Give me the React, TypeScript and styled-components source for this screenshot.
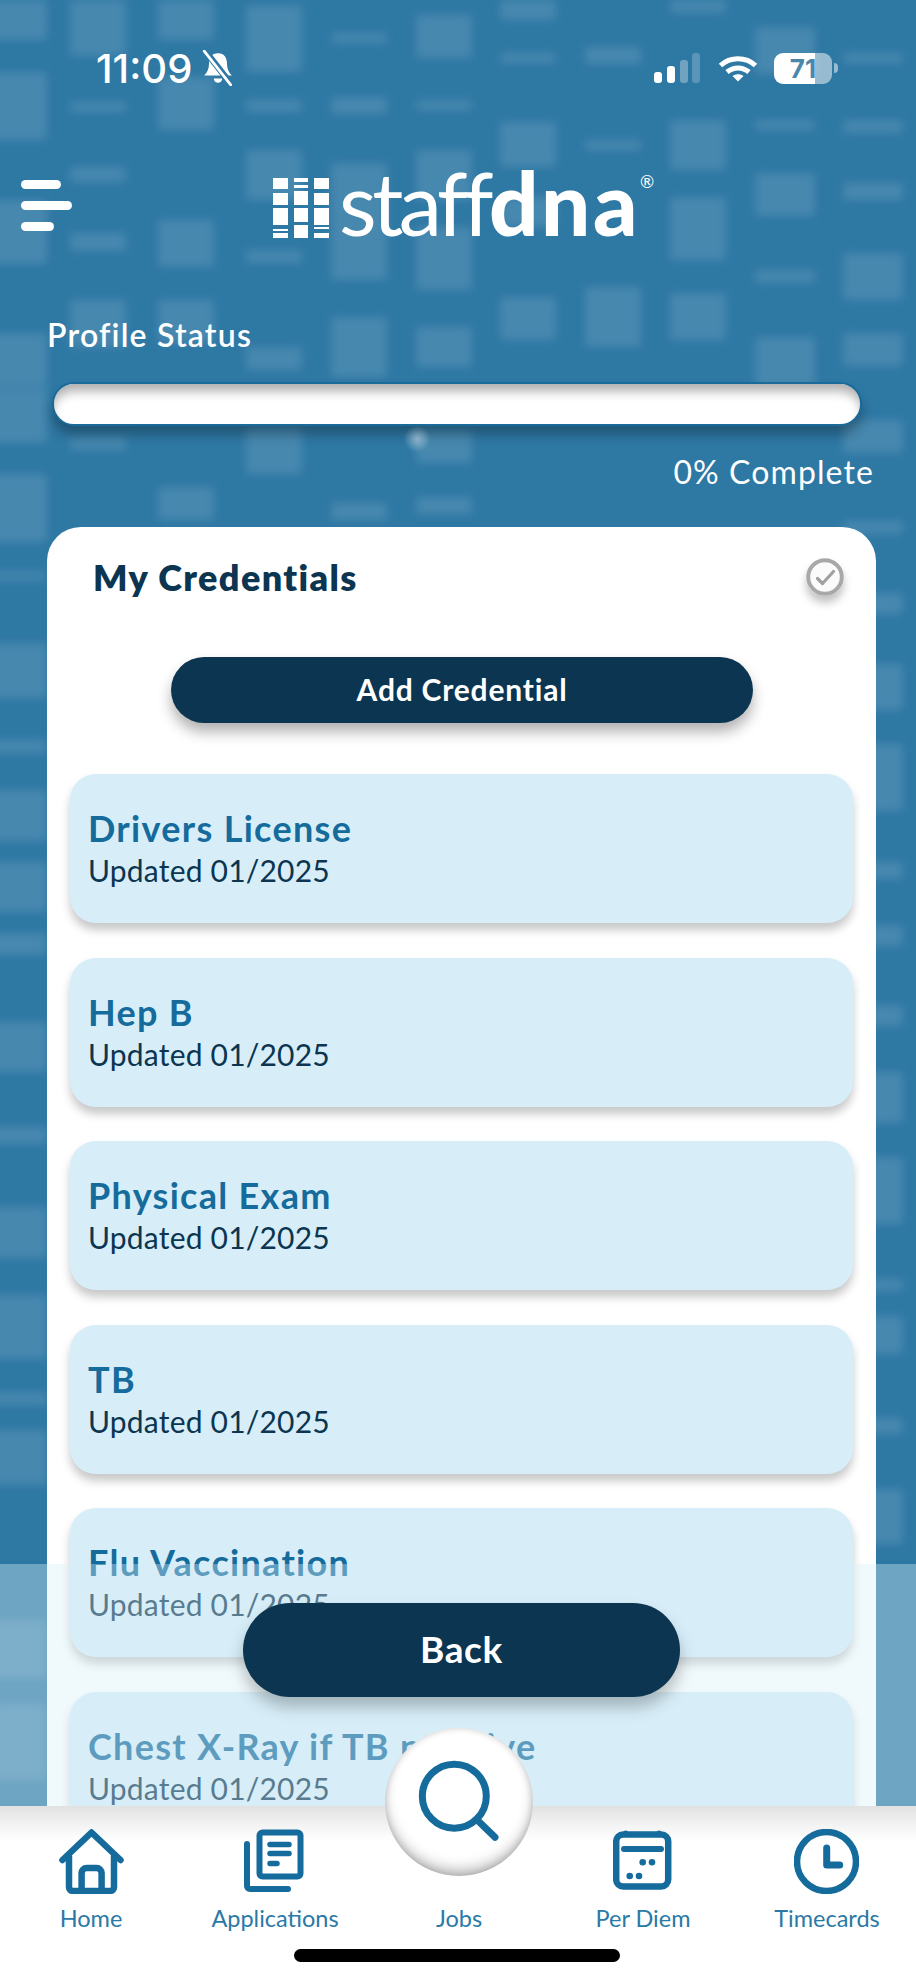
import * as React from 'react';
import styled, { createGlobalStyle } from 'styled-components';

const GlobalStyle = createGlobalStyle`
  html, body {
    margin: 0;
    padding: 0;
    background: #2e78a4;
  }
  * {
    box-sizing: border-box;
  }
`;

const FONT = `'Lato', 'Open Sans', sans-serif`;
const NAVY = '#0b3550';
const BLUE = '#146b9c';

// x start of each faded column and its [y, height] blocks
const BG_COLUMNS: [number, number, [number, number][]][] = [
  [-10, 57, [[0, 40], [72, 68], [200, 64], [333, 55], [390, 53], [474, 68], [572, 8], [643, 55], [740, 13], [790, 51], [862, 50], [933, 22], [1022, 50], [1127, 17], [1207, 51], [1295, 64], [1392, 13], [1430, 55], [1620, 58], [1704, 76]]],
  [70, 56, [[0, 56], [102, 10], [167, 15], [233, 18], [300, 47], [437, 13]]],
  [158, 56, [[0, 40], [77, 53], [220, 47], [300, 43], [487, 33]]],
  [246, 56, [[5, 67], [100, 12], [150, 50], [250, 13], [347, 23], [427, 47]]],
  [331, 56, [[33, 10], [97, 17], [163, 117], [317, 60], [503, 17]]],
  [416, 56, [[15, 43], [100, 10], [150, 50], [227, 63], [327, 40], [430, 33], [497, 17]]],
  [500, 56, [[0, 20], [53, 10], [122, 45], [197, 30], [297, 43]]],
  [585, 56, [[47, 17], [140, 10], [287, 60]]],
  [670, 56, [[0, 13], [120, 50], [197, 63], [293, 47]]],
  [755, 60, [[27, 47], [120, 10], [173, 43], [270, 13], [337, 53]]],
  [843, 60, [[53, 10], [120, 13], [183, 17], [253, 47], [333, 33], [420, 33], [521, 13], [593, 21], [664, 46], [744, 67], [862, 17], [925, 21], [1005, 21], [1072, 51], [1157, 67], [1279, 12], [1316, 38], [1418, 16], [1489, 55]]],
];

const Page = styled.div`
  position: relative;
  width: 916px;
  height: 1980px;
  overflow: hidden;
  background: #2e78a4;
  font-family: ${FONT};
`;

const Backdrop = styled.svg`
  position: absolute;
  inset: 0;
`;

const Content = styled.div`
  position: relative;
  display: flex;
  flex-direction: column;
`;

const StatusBar = styled.div`
  display: flex;
  align-items: center;
  height: 40px;
  margin-top: 48px;
  padding: 0 78px 0 96px;
  color: #fff;
`;

const Time = styled.span`
  font-family: 'Inter', sans-serif;
  font-size: 40px;
  font-weight: 500;
`;

const BellIcon = styled.svg`
  margin-left: 8px;
`;

const StatusIcons = styled.div`
  display: flex;
  align-items: center;
  margin-left: auto;
`;

const WifiIcon = styled.svg`
  margin: 0 16px 0 17px;
`;

const Battery = styled.div`
  position: relative;
  width: 58px;
  height: 31px;
  border-radius: 9px;
  overflow: hidden;
  background: linear-gradient(to right, #fff 71%, rgba(255, 255, 255, 0.5) 71%);
  display: flex;
  align-items: center;
  justify-content: center;
  font-family: 'Inter', sans-serif;
  font-size: 26px;
  font-weight: 700;
  color: #4b87ab;
`;

const BatteryNub = styled.div`
  width: 4px;
  height: 10px;
  margin-left: 2px;
  border-radius: 0 4px 4px 0;
  background: rgba(255, 255, 255, 0.5);
`;

const Header = styled.div`
  display: flex;
  align-items: flex-start;
  height: 100px;
  margin-top: 80px;
  padding-left: 21px;
`;

const MenuButton = styled.div`
  display: flex;
  flex-direction: column;
  gap: 12px;
  width: 51px;
  padding-top: 12px;
`;

const MenuBar = styled.div<{ $width: number }>`
  width: ${(p) => p.$width}px;
  height: 9px;
  border-radius: 5px;
  background: #fff;
`;

const Logo = styled.div`
  position: relative;
  display: flex;
  align-items: flex-end;
  height: 70px;
  margin-left: 201px;
  color: #fff;
`;

const LogoMark = styled.svg`
  margin-right: 10px;
`;

const LogoText = styled.span<{ $bold?: boolean }>`
  font-size: 87px;
  line-height: 70px;
  font-weight: ${(p) => (p.$bold ? 900 : 400)};
  letter-spacing: ${(p) => (p.$bold ? '2.5px' : '-4.5px')};
`;

const Registered = styled.span`
  font-size: 17px;
  line-height: 18px;
  align-self: flex-start;
  margin-top: 5px;
`;

const ProfileLabel = styled.div`
  height: 40px;
  margin-top: 47px;
  padding-left: 47px;
  font-size: 32px;
  font-weight: 600;
  letter-spacing: 1.2px;
  line-height: 40px;
  color: #fff;
`;

const ProgressTrack = styled.div`
  width: 810px;
  height: 44px;
  margin: 27px 0 0 52px;
  border: 2px solid #1a6a9a;
  border-radius: 22px;
  background: #fff;
  box-shadow: inset 0 10px 11px -3px rgba(0, 0, 0, 0.32), 0 9px 12px rgba(0, 0, 0, 0.28);
`;

const Gleam = styled.div`
  position: absolute;
  left: 403px;
  top: 425px;
  width: 28px;
  height: 28px;
  background: radial-gradient(ellipse at center, rgba(255, 255, 255, 0.42), rgba(255, 255, 255, 0) 68%);
`;

const CompleteText = styled.div`
  height: 40px;
  margin-top: 26px;
  padding-right: 42px;
  font-size: 32px;
  font-weight: 400;
  letter-spacing: 1.1px;
  line-height: 40px;
  text-align: right;
  color: #fff;
`;

const Card = styled.div`
  width: 829px;
  margin: 35px 0 0 47px;
  padding-bottom: 40px;
  border-radius: 34px 34px 0 0;
  background: #fff;
`;

const CardHead = styled.div`
  display: flex;
  align-items: center;
  justify-content: space-between;
  height: 100px;
  padding: 0 32px 0 46px;
`;

const CardTitle = styled.h2`
  margin: 0;
  font-size: 36px;
  font-weight: 800;
  letter-spacing: 1.4px;
  color: ${NAVY};
`;

const CheckBadge = styled.div`
  display: flex;
  width: 38px;
  height: 38px;
  border-radius: 50%;
  box-shadow: 0 7px 9px rgba(0, 0, 0, 0.24);
`;

const AddButton = styled.div`
  display: flex;
  align-items: center;
  justify-content: center;
  width: 582px;
  height: 66px;
  margin: 30px 0 51px 124px;
  padding-bottom: 2px;
  border-radius: 33px;
  background: ${NAVY};
  box-shadow: 0 9px 14px rgba(0, 0, 0, 0.3);
  font-size: 30px;
  font-weight: 700;
  letter-spacing: 0.8px;
  color: #fff;
`;

const ItemList = styled.div`
  display: flex;
  flex-direction: column;
  gap: 34.6px;
  padding: 0 23px;
`;

const Item = styled.div`
  height: 149px;
  padding: 34px 0 0 18px;
  border-radius: 26px;
  background: #d7eef8;
  box-shadow: 0 7px 10px rgba(0, 0, 0, 0.22);
`;

const ItemTitle = styled.div`
  font-size: 36px;
  font-weight: 700;
  letter-spacing: 1.3px;
  line-height: 40px;
  color: ${BLUE};
`;

const ItemSub = styled.div`
  margin-top: 3px;
  font-size: 30px;
  letter-spacing: 0.2px;
  line-height: 38px;
  color: ${NAVY};
`;

const Fade = styled.div`
  position: absolute;
  left: 0;
  right: 0;
  top: 1564px;
  height: 242px;
  background: rgba(215, 238, 248, 0.375);
`;

const BackButton = styled.div`
  position: absolute;
  left: 243px;
  top: 1603px;
  display: flex;
  align-items: center;
  justify-content: center;
  width: 437px;
  height: 94px;
  padding-bottom: 4px;
  border-radius: 47px;
  background: ${NAVY};
  box-shadow: 0 10px 16px rgba(0, 0, 0, 0.25);
  font-size: 37px;
  font-weight: 700;
  letter-spacing: 0.6px;
  color: #fff;
`;

const TabBar = styled.div`
  position: absolute;
  left: 0;
  top: 1806px;
  width: 916px;
  height: 174px;
  display: grid;
  grid-template-columns: repeat(5, 184px);
  background: linear-gradient(#e1e1e1, #f4f4f4 20px, #fff 36px);
`;

const Tab = styled.div`
  display: flex;
  flex-direction: column;
  align-items: center;
  height: 128px;
  margin-left: -2px;
  padding-top: 23px;
  font-size: 23.5px;
  color: #2a79a6;
`;

const TabIcon = styled.svg<{ $nudge?: boolean }>`
  display: block;
  margin-left: ${(p) => (p.$nudge ? '-2px' : '0')};
`;

const TabLabel = styled.span<{ $low?: boolean }>`
  margin-top: ${(p) => (p.$low ? '12px' : '8px')};
  line-height: 32px;
`;

const JobsCircle = styled.div`
  position: absolute;
  left: 385px;
  top: -78px;
  display: flex;
  align-items: center;
  justify-content: center;
  width: 148px;
  height: 148px;
  border-radius: 50%;
  background: #fff;
  box-shadow: inset 0 -8px 14px -2px rgba(0, 0, 0, 0.28), inset 0 0 7px rgba(0, 0, 0, 0.16);
`;

const JobsSpacer = styled.div`
  height: 65px;
`;

const HomeIndicator = styled.div`
  position: absolute;
  left: 294px;
  top: 143px;
  width: 326px;
  height: 13px;
  border-radius: 7px;
  background: #000;
`;

const credentials = [
  'Drivers License',
  'Hep B',
  'Physical Exam',
  'TB',
  'Flu Vaccination',
  'Chest X-Ray if TB positive',
];

const BackdropArt = () => (
  <Backdrop width={916} height={1806} viewBox="0 0 916 1806">
    <defs>
      <filter id="soft">
        <feGaussianBlur stdDeviation="5" />
      </filter>
    </defs>
    <g filter="url(#soft)" fill="#6a9fbf" opacity="0.42">
      {BG_COLUMNS.map(([x, w, blocks]) =>
        blocks.map(([y, h]) => <rect key={`${x}-${y}`} x={x} y={y} width={w} height={h} />)
      )}
    </g>
  </Backdrop>
);

const LogoMarkArt = () => (
  <LogoMark width={56} height={60} viewBox="0 0 56 60" fill="#fff">
    <rect x={0} y={0} width={15} height={11} />
    <rect x={0} y={15} width={15} height={12} />
    <rect x={0} y={30} width={15} height={17} />
    <rect x={0} y={51} width={15} height={2} />
    <rect x={0} y={55} width={15} height={5} />
    <rect x={21} y={0} width={14} height={4} />
    <rect x={21} y={7} width={14} height={3} />
    <rect x={21} y={13} width={14} height={14} />
    <rect x={21} y={30} width={14} height={14} />
    <rect x={21} y={47} width={14} height={13} />
    <rect x={41} y={0} width={15} height={11} />
    <rect x={41} y={15} width={15} height={12} />
    <rect x={41} y={30} width={15} height={17} />
    <rect x={41} y={49} width={15} height={2} />
    <rect x={41} y={55} width={15} height={5} />
  </LogoMark>
);

const App = () => {
  return (
    <Page>
      <GlobalStyle />
      <BackdropArt />
      <Content>
        <StatusBar>
          <Time>11:09</Time>
          <BellIcon width={36} height={36} viewBox="0 0 32 34">
            <path d="M16 3c-6 0-8.500 4.500-8.500 10 0 5-1.500 8-4.500 11h26c-3-3-4.500-6-4.500-11 0-5.500-2.500-10-8.500-10z" fill="#fff" />
            <path d="M12 27a4 4 0 0 0 8 0z" fill="#fff" />
            <path d="M4 1l25 32" stroke="#2e78a4" strokeWidth="6" />
            <path d="M3 1l25 32" stroke="#fff" strokeWidth="2.600" strokeLinecap="round" />
          </BellIcon>
          <StatusIcons>
            <svg width={47} height={30} viewBox="0 0 47 30" fill="#fff">
              <rect x={0} y={19} width={8} height={11} rx={3} />
              <rect x={13} y={13} width={8} height={17} rx={3} />
              <rect x={26} y={7} width={8} height={23} rx={3} fill="rgba(255,255,255,0.32)" />
              <rect x={38} y={0} width={8} height={30} rx={3} fill="rgba(255,255,255,0.22)" />
            </svg>
            <WifiIcon width={40} height={27} viewBox="0 0 40 27" fill="none" stroke="#fff" strokeWidth="5">
              <path d="M2.500 10.500C12 1.500 28 1.500 37.500 10.500" />
              <path d="M9 17c6.500-5.500 15.500-5.500 22 0" />
              <path d="M20 26.500l-5.500-5.500c3-2.500 8-2.500 11 0z" fill="#fff" stroke="none" />
            </WifiIcon>
            <Battery>71</Battery>
            <BatteryNub />
          </StatusIcons>
        </StatusBar>

        <Header>
          <MenuButton>
            <MenuBar $width={40} />
            <MenuBar $width={51} />
            <MenuBar $width={33} />
          </MenuButton>
          <Logo>
            <LogoMarkArt />
            <LogoText>staff</LogoText>
            <LogoText $bold>dna</LogoText>
            <Registered>®</Registered>
          </Logo>
        </Header>

        <ProfileLabel>Profile Status</ProfileLabel>
        <ProgressTrack />
        <CompleteText>0% Complete</CompleteText>

        <Card>
          <CardHead>
            <CardTitle>My Credentials</CardTitle>
            <CheckBadge>
              <svg width={38} height={38} viewBox="0 0 38 38" fill="none">
                <circle cx={19} cy={19} r={16.800} fill="#fbfbfb" stroke="#a8a8a8" strokeWidth="4" />
                <path d="M11.500 20.500l5 5 11-12" stroke="#a0a0a0" strokeWidth="3.200" strokeLinecap="round" strokeLinejoin="round" />
              </svg>
            </CheckBadge>
          </CardHead>
          <AddButton>Add Credential</AddButton>
          <ItemList>
            {credentials.map((name) => (
              <Item key={name}>
                <ItemTitle>{name}</ItemTitle>
                <ItemSub>Updated 01/2025</ItemSub>
              </Item>
            ))}
          </ItemList>
        </Card>
      </Content>

      <Gleam />
      <Fade />
      <BackButton>Back</BackButton>

      <TabBar>
        <Tab>
          <TabIcon width={65} height={65} viewBox="0 0 65 65" fill="none" stroke={BLUE} strokeWidth="6.500" strokeLinecap="round" strokeLinejoin="round">
            <path d="M3.500 31L32.500 3.500 61.500 31" />
            <path d="M10 28v30a4 4 0 0 0 4 4h37a4 4 0 0 0 4-4V28" />
            <path d="M22.600 61V44a5 5 0 0 1 5-5h10a5 5 0 0 1 5 5v17" />
          </TabIcon>
          <TabLabel>Home</TabLabel>
        </Tab>
        <Tab>
          <TabIcon $nudge width={60} height={65} viewBox="0 0 60 65" fill="none" stroke={BLUE} strokeLinecap="round" strokeLinejoin="round">
            <rect x={15.500} y={3.500} width={41} height={44} rx={3} strokeWidth="6" />
            <path d="M3 15v42a3 3 0 0 0 3 3h38" strokeWidth="6" />
            <path d="M26 15.500h19M26 24.500h19M26 34.500h7" strokeWidth="5.500" />
          </TabIcon>
          <TabLabel>Applications</TabLabel>
        </Tab>
        <Tab>
          <JobsSpacer />
          <TabLabel $low>Jobs</TabLabel>
        </Tab>
        <Tab>
          <TabIcon $nudge width={59} height={65} viewBox="0 0 59 65" fill="none" stroke={BLUE}>
            <rect x={3.200} y={5.500} width={52} height={52} rx={7} strokeWidth="6.500" />
            <circle cx={12.700} cy={4} r={2.500} fill={BLUE} stroke="none" />
            <circle cx={46} cy={4} r={2.500} fill={BLUE} stroke="none" />
            <path d="M11 20h37" strokeWidth="6" strokeLinecap="round" />
            <g fill={BLUE} stroke="none">
              <circle cx={29.700} cy={33.300} r={3.300} />
              <circle cx={39} cy={33.300} r={3.300} />
              <circle cx={16.700} cy={47} r={3.300} />
              <circle cx={26} cy={47} r={3.300} />
            </g>
          </TabIcon>
          <TabLabel>Per Diem</TabLabel>
        </Tab>
        <Tab>
          <TabIcon $nudge width={65} height={65} viewBox="0 0 65 65" fill="none" stroke={BLUE}>
            <circle cx={32.500} cy={32.500} r={29.500} strokeWidth="6.500" />
            <path d="M32.700 19v17h13" strokeWidth="7" strokeLinecap="round" strokeLinejoin="round" />
          </TabIcon>
          <TabLabel>Timecards</TabLabel>
        </Tab>

        <JobsCircle>
          <svg width={90} height={90} viewBox="0 0 90 90" fill="none" stroke={BLUE}>
            <circle cx={40.300} cy={39.200} r={32} strokeWidth="7" />
            <path d="M62.700 62.500L81 80.200" strokeWidth="7" strokeLinecap="round" />
          </svg>
        </JobsCircle>
        <HomeIndicator />
      </TabBar>
    </Page>
  );
};

export default App;
